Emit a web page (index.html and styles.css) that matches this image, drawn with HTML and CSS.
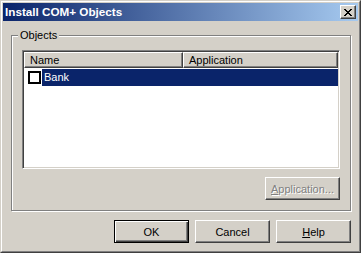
FILE: index.html
```html
<!DOCTYPE html>
<html lang="en">
<head>
    <meta charset="UTF-8">
    <title>Install COM+ Objects</title>
    <link rel="stylesheet" href="styles.css">
</head>
<body>
    <div class="window">
        <div class="frame">
            <div class="titlebar">
                <span class="title">Install COM+ Objects</span>
                <button class="close">
                    <svg width="8" height="7" viewBox="0 0 8 7" shape-rendering="crispEdges">
                        <path d="M0 0h2v1H0zM6 0h2v1H6zM1 1h2v1H1zM5 1h2v1H5zM2 2h4v1H2zM3 3h2v1H3zM2 4h4v1H2zM1 5h2v1H1zM5 5h2v1H5zM0 6h2v1H0zM6 6h2v1H6z" fill="#000"/>
                    </svg>
                </button>
            </div>
            <div class="client">
                <fieldset class="group">
                    <legend>Objects</legend>
                    <div class="listview">
                        <div class="header">
                            <div class="col col-name">Name</div>
                            <div class="col col-app">Application</div>
                        </div>
                        <div class="row">
                            <span class="check"></span>
                            <span class="item selected">Bank</span>
                        </div>
                    </div>
                    <div class="group-actions">
                        <button class="btn" disabled><u>A</u>pplication...</button>
                    </div>
                </fieldset>
                <div class="actions">
                    <button class="btn default">OK</button>
                    <button class="btn">Cancel</button>
                    <button class="btn"><u>H</u>elp</button>
                </div>
            </div>
        </div>
    </div>
</body>
</html>
```

FILE: styles.css
```css
body {
    margin: 0;
    background-color: #d4d0c8;
    font-family: 'Liberation Sans', Arial, sans-serif;
    font-size: 11px;
    color: #000;
}
.window {
    width: 361px;
    height: 253px;
    box-sizing: border-box;
    border: 1px solid;
    border-color: #d4d0c8 #404040 #404040 #d4d0c8;
    background-color: #d4d0c8;
}
.frame {
    height: 100%;
    box-sizing: border-box;
    border: 1px solid;
    border-color: #fff #808080 #808080 #fff;
    padding: 1px;
    display: flex;
    flex-direction: column;
}
.titlebar {
    height: 18px;
    display: flex;
    align-items: center;
    padding: 0 2px;
    background: linear-gradient(to right, #0a246a, #a6caf0);
    color: #fff;
    font-weight: bold;
}
.title {
    font-size: 11.7px;
    line-height: 18px;
}
.close {
    margin-left: auto;
    width: 16px;
    height: 14px;
    box-sizing: border-box;
    padding: 3px 0 0 3px;
    display: flex;
    align-items: flex-start;
    background-color: #d4d0c8;
    border: 1px solid;
    border-color: #fff #404040 #404040 #fff;
    box-shadow: inset -1px -1px 0 #808080;
}
.close svg {
    display: block;
}
.client {
    flex: 1;
    display: flex;
    flex-direction: column;
}
.group {
    margin: 8px 7px 0 8px;
    padding: 8px 10px 10px;
    border: 1px solid #808080;
    box-shadow: 1px 1px 0 #fff, inset 1px 1px 0 #fff;
    min-width: 0;
}
.group legend {
    margin-left: -4px;
    padding: 0 2px;
    line-height: 13px;
    background-color: #d4d0c8;
}
.listview {
    height: 119px;
    box-sizing: border-box;
    padding: 1px;
    border: 1px solid;
    border-color: #808080 #fff #fff #808080;
    box-shadow: inset 1px 1px 0 #404040, inset -1px -1px 0 #d4d0c8;
    background-color: #fff;
}
.header {
    display: flex;
    height: 16px;
}
.col {
    box-sizing: border-box;
    height: 16px;
    line-height: 14px;
    padding-left: 5px;
    background-color: #d4d0c8;
    border: 1px solid;
    border-color: #fff #404040 #404040 #fff;
    box-shadow: inset -1px -1px 0 #808080;
}
.col-name {
    width: 159px;
}
.col-app {
    flex: 1;
}
.row {
    display: flex;
    align-items: center;
    height: 17px;
    margin-top: 1px;
}
.check {
    width: 13px;
    height: 13px;
    box-sizing: border-box;
    margin-left: 4px;
    border: 2px solid #000;
    background-color: #fff;
}
.item {
    flex: 1;
    height: 17px;
    line-height: 17px;
    margin-left: 1px;
    padding-left: 2px;
}
.selected {
    background-color: #0a246a;
    color: #fff;
}
.group-actions {
    display: flex;
    justify-content: flex-end;
    margin-top: 8px;
}
.btn {
    width: 75px;
    height: 23px;
    padding: 0;
    font-family: inherit;
    font-size: 11px;
    color: #000;
    background-color: #d4d0c8;
    border: 1px solid;
    border-color: #fff #404040 #404040 #fff;
    box-shadow: inset -1px -1px 0 #808080;
}
.btn:disabled {
    color: #808080;
    text-shadow: 1px 1px 0 #fff;
}
.btn.default {
    border-color: #000;
    box-shadow: inset 1px 1px 0 #fff, inset -1px -1px 0 #404040, inset -2px -2px 0 #808080;
}
.actions {
    display: flex;
    justify-content: flex-end;
    gap: 6px;
    margin-top: 9px;
    padding-right: 7px;
}
```
